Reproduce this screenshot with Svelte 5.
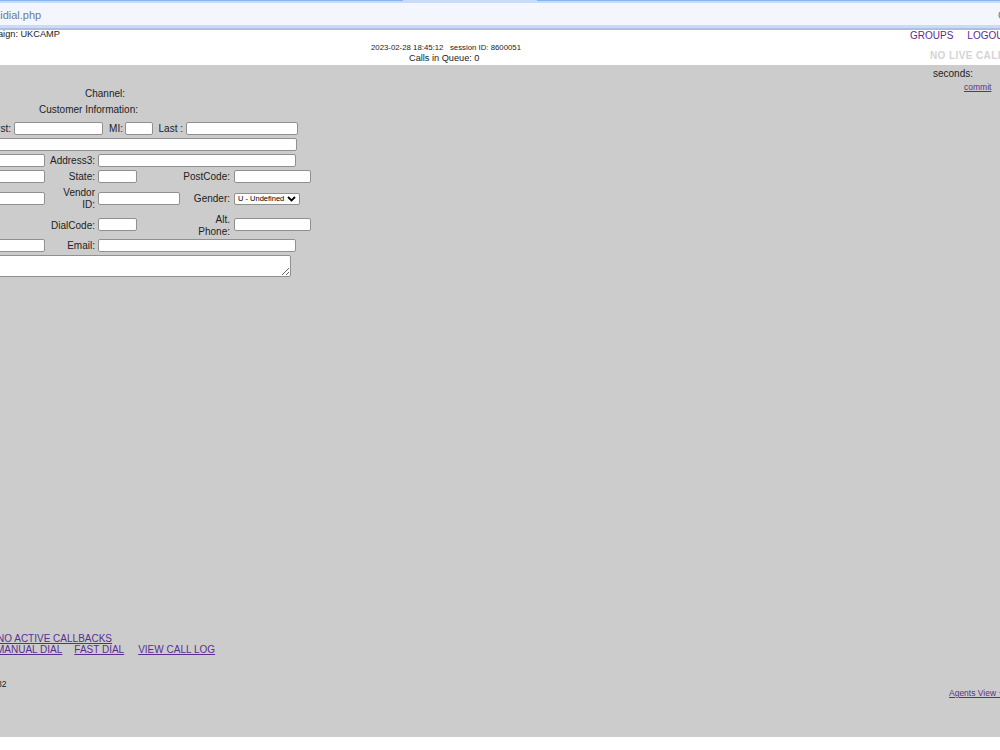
<script>
  const links = ["MANUAL DIAL", "FAST DIAL", "VIEW CALL LOG"];
</script>

<div class="page">
  <div class="browser-bar">
    <div class="tabs"><span class="tab first-tab"></span><span class="tab active"></span><span class="tab"></span></div>
    <div class="address">
      <span class="url">agc/vicidial.php</span>
      <span class="star">C</span>
    </div>
    <div class="bar-edge"></div>
  </div>

  <div class="top">
    <div class="campaign">Campaign: UKCAMP</div>
    <div class="status">
      <div class="small">2023-02-28 18:45:12 &nbsp; session ID: 8600051</div>
      <div class="queue">Calls in Queue: 0</div>
    </div>
    <div class="top-right">
      <div class="top-links"><a href="#g">GROUPS</a><a href="#l">LOGOUT</a></div>
      <div class="live">NO LIVE CALL</div>
    </div>
  </div>

  <div class="main">
    <div class="upper">
      <div class="form">
        <div class="head channel">Channel:</div>
        <div class="head info">Customer Information:</div>

        <div class="row name">
          <label class="first-label">First:</label><input class="first" />
          <label class="mi">MI:</label><input class="mid" />
          <label class="last">Last :</label><input class="lastname" />
        </div>
        <div class="row"><input class="addr1" /></div>
        <div class="row">
          <input class="short" />
          <label class="l2">Address3:</label><input class="addr3" />
        </div>
        <div class="row">
          <input class="short" />
          <label class="l2">State:</label><input class="tiny" />
          <label class="l3">PostCode:</label><input class="post" />
        </div>
        <div class="row vendor-row">
          <input class="short" />
          <label class="l2">Vendor<br />ID:</label><input class="vendor" />
          <label class="gender-label">Gender:</label>
          <select class="gender"><option>U - Undefined</option></select>
        </div>
        <div class="row phone-row">
          <span class="short"></span>
          <label class="l2">DialCode:</label><input class="tiny" />
          <label class="l3">Alt.<br />Phone:</label><input class="post" />
        </div>
        <div class="row">
          <input class="short" />
          <label class="l2">Email:</label><input class="addr3" />
        </div>
        <div class="row comments"><textarea></textarea></div>
      </div>

      <div class="side">
        <div>seconds:</div>
        <a class="commit" href="#c">commit</a>
      </div>
    </div>

    <div class="bottom">
      <a href="#n" class="callbacks">NO ACTIVE CALLBACKS</a>
      <div class="dial-links">
        {#each links as link}
          <a href="#d">{link}</a>
        {/each}
      </div>
      <div class="foot">
        <span class="version">2.14-682</span>
        <a href="#a" class="agents">Agents View +</a>
      </div>
    </div>
  </div>
</div>

<style>
  :global(body) {
    margin: 0;
    overflow: hidden;
    background: #fff;
  }

  .page {
    width: 1060px;
    margin-left: -30px;
    font-family: "Liberation Sans", Arial, sans-serif;
    font-size: 10px;
    color: #222;
  }

  a {
    color: #5c2d91;
  }

  .browser-bar {
    height: 30px;
    background: #c9dcf7;
  }
  .tabs {
    display: flex;
    height: 1px;
  }
  .tab {
    flex: 1;
    background: #8ab4f0;
  }
  .tab.first-tab {
    flex: 0 0 433px;
  }
  .tab.active {
    flex: 0 0 134px;
    background: #c9dcf7;
  }
  .address {
    display: flex;
    justify-content: space-between;
    align-items: center;
    box-sizing: border-box;
    height: 22px;
    margin-top: 2px;
    padding-top: 1px;
    background: #f3f6fc;
    font-size: 11px;
    color: #6f7a8c;
  }
  .url {
    margin-left: -4px;
  }
  .star {
    margin-right: 24px;
  }
  .bar-edge {
    height: 2px;
    margin-top: 3px;
    background: #aebfe3;
  }

  .top {
    display: grid;
    grid-template-columns: 401px 151px 1fr;
    height: 35px;
  }
  .campaign {
    padding-left: 3.5px;
    font-size: 9.2px;
    line-height: 9px;
  }
  .status {
    padding-top: 12px;
    line-height: 11px;
    white-space: nowrap;
  }
  .small {
    font-size: 7.8px;
  }
  .queue {
    padding-left: 38px;
    font-size: 9.2px;
  }
  .top-right {
    justify-self: end;
    width: 120px;
  }
  .top-links {
    display: flex;
    gap: 14px;
    line-height: 11px;
    white-space: nowrap;
  }
  .top-links a {
    text-decoration: none;
  }
  .live {
    margin-top: 9px;
    margin-left: 20px;
    font-weight: bold;
    color: #d4d4d4;
    letter-spacing: 0.4px;
    font-size: 10px;
    white-space: nowrap;
  }

  .main {
    height: 672px;
    background: #ccc;
    display: flex;
    flex-direction: column;
    justify-content: space-between;
  }
  .upper {
    display: flex;
    justify-content: space-between;
  }

  .form {
    padding-top: 23px;
  }
  .head {
    line-height: 12px;
    text-align: right;
  }
  .channel {
    width: 155px;
  }
  .info {
    width: 168px;
    margin-top: 4px;
  }

  .row {
    display: flex;
    align-items: center;
    height: 16px;
    padding-left: 13px;
  }
  .row.name {
    margin-top: 5px;
    padding-left: 0;
  }
  .row.vendor-row {
    height: 28px;
  }
  .row.phone-row {
    height: 25px;
  }
  .row.comments {
    height: auto;
    margin-top: 1px;
  }
  label {
    flex: none;
    text-align: right;
    margin-right: 3px;
    line-height: 12px;
  }
  input, textarea, select {
    box-sizing: border-box;
    background: #fff;
    border: 1px solid #909090;
    border-radius: 2px;
    margin: 0 0 2px;
    padding: 0;
    flex: none;
  }
  input {
    height: 13px;
  }
  .first-label { width: 41px; }
  .first { width: 89px; }
  label.mi { width: 20px; margin-right: 2px; }
  .mid { width: 28px; }
  .last { width: 30px; }
  .lastname { width: 112px; }
  .addr1 { width: 314px; }
  .short { flex: none; width: 62px; }
  .l2 { width: 50px; }
  .addr3 { width: 198px; }
  .tiny { width: 39px; }
  label.l3 { width: 93px; margin-right: 4px; }
  .post { width: 77px; }
  .vendor { width: 82px; }
  label.gender-label { width: 50px; margin-right: 4px; }
  .gender {
    width: 66px;
    height: 12px;
    margin-bottom: 1px;
    padding-left: 3px;
    font-family: inherit;
    font-size: 7.5px;
    appearance: none;
    background: #fff url("data:image/svg+xml,%3Csvg xmlns='http://www.w3.org/2000/svg' width='9' height='6'%3E%3Cpath d='M1 1l3.5 3.5L8 1' fill='none' stroke='%23000' stroke-width='1.8'/%3E%3C/svg%3E") no-repeat right 3px center;
  }
  textarea {
    display: block;
    width: 308px;
    height: 22px;
    margin-bottom: 0;
  }

  .side {
    width: 97px;
    padding-top: 3px;
    line-height: 12px;
  }
  .commit {
    display: block;
    margin-top: 1px;
    margin-left: 31px;
    font-size: 8.5px;
  }

  .bottom {
    line-height: 11px;
    padding-bottom: 38px;
  }
  .callbacks {
    display: block;
    margin-left: 27px;
  }
  .dial-links {
    display: flex;
    gap: 12px;
    margin-left: 26px;
  }
  .dial-links a:last-child {
    margin-left: 2px;
  }
  .foot {
    display: flex;
    justify-content: space-between;
    align-items: flex-start;
    margin-top: 24px;
    font-size: 8.5px;
  }
  .version {
    margin-left: 3px;
  }
  .agents {
    margin-top: 9px;
    width: 81px;
    white-space: nowrap;
  }
</style>
